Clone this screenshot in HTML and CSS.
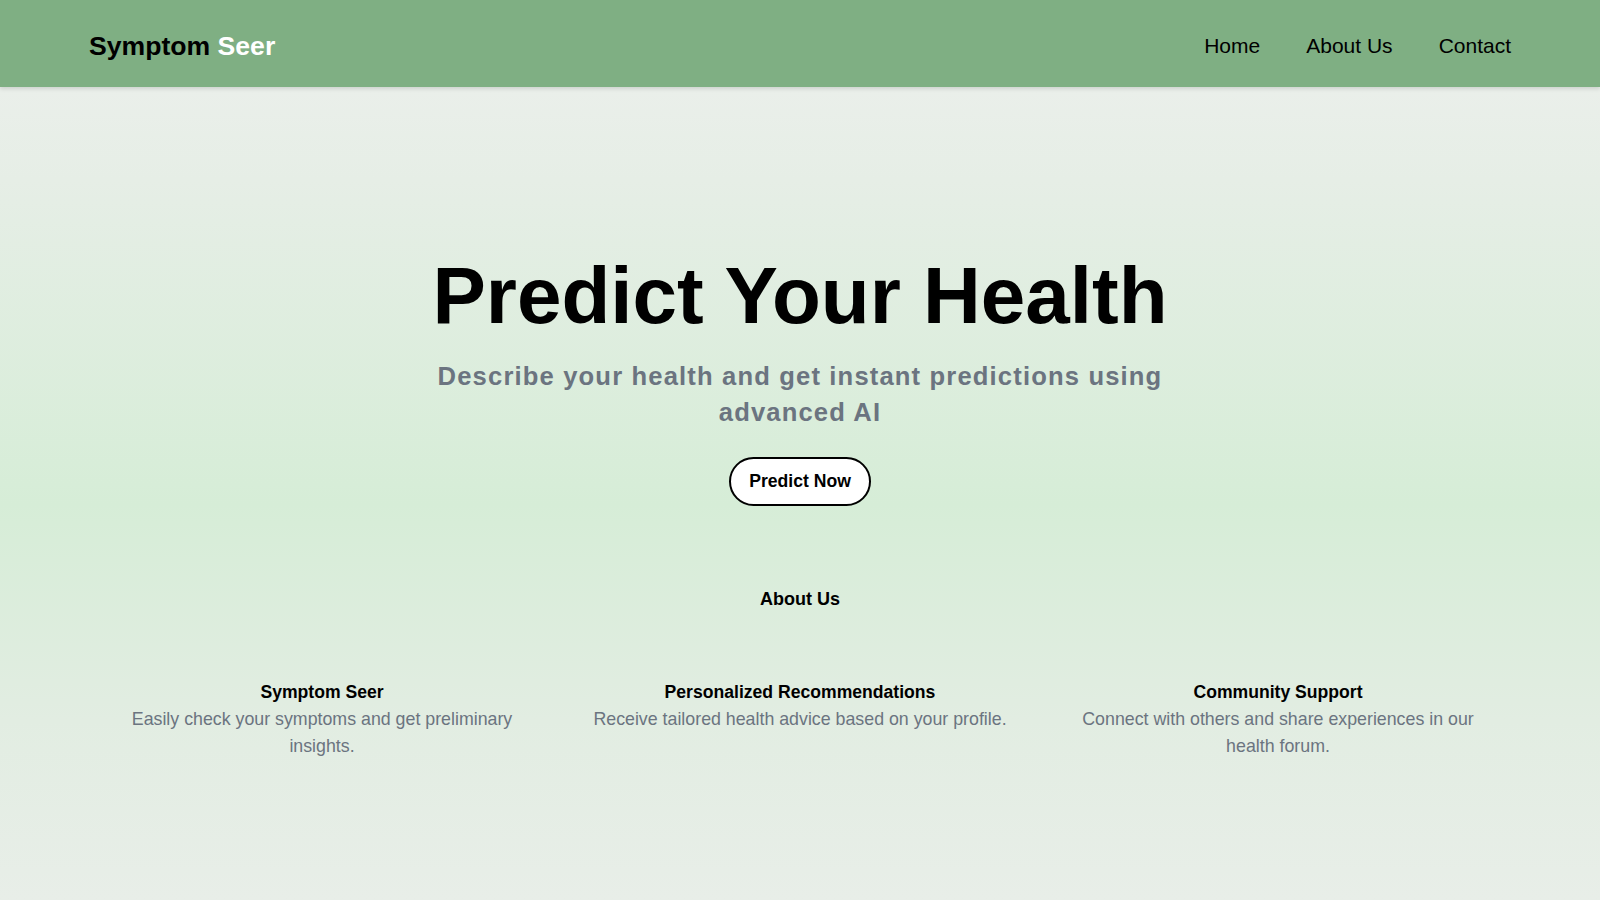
FILE: index.html
```html
<!DOCTYPE html>
<html lang="en">
<head>
<meta charset="utf-8">
<title>Symptom Seer</title>
<link rel="stylesheet" href="styles.css">
</head>
<body>
<header class="site-header">
  <div class="logo">Symptom <span class="logo-accent">Seer</span></div>
  <nav class="nav">
    <a href="#" class="nav-link">Home</a>
    <a href="#" class="nav-link">About Us</a>
    <a href="#" class="nav-link">Contact</a>
  </nav>
</header>
<main class="main">
  <section class="hero">
    <h1 class="hero-title">Predict Your Health</h1>
    <p class="hero-sub">Describe your health and get instant predictions using advanced AI</p>
    <a href="#" class="btn">Predict Now</a>
  </section>
  <section class="about">
    <h2 class="about-title">About Us</h2>
    <div class="features">
      <div class="feature">
        <h3 class="feature-title">Symptom Seer</h3>
        <p class="feature-text">Easily check your symptoms and get preliminary insights.</p>
      </div>
      <div class="feature">
        <h3 class="feature-title">Personalized Recommendations</h3>
        <p class="feature-text">Receive tailored health advice based on your profile.</p>
      </div>
      <div class="feature">
        <h3 class="feature-title">Community Support</h3>
        <p class="feature-text">Connect with others and share experiences in our health forum.</p>
      </div>
    </div>
  </section>
</main>
</body>
</html>
```
FILE: styles.css
```css
* { box-sizing: border-box; }
html, body { margin: 0; padding: 0; }
body {
  font-family: "Liberation Sans", Arial, Helvetica, sans-serif;
  color: #000;
  min-height: 900px;
  background: linear-gradient(to bottom, #eef0ee 0%, #e6eee6 20%, #d6edd7 56%, #e2ede2 80%, #e8eee8 100%);
}
.site-header {
  height: 87px;
  background: #7faf83;
  display: flex;
  align-items: center;
  justify-content: space-between;
  padding: 0 89px 0 89px;
  box-shadow: 0 2px 4px rgba(0,0,0,0.12);
  position: relative;
  z-index: 1;
}
.logo {
  font-size: 26.6px;
  font-weight: 700;
  line-height: 32px;
  margin-top: 4px;
}
.logo-accent { color: #fff; }
.nav { display: flex; gap: 46px; margin-top: 4px; }
.nav-link {
  font-size: 21px;
  color: #000;
  text-decoration: none;
  line-height: 26px;
}
.main { padding-top: 161px; }
.hero {
  display: flex;
  flex-direction: column;
  align-items: center;
  text-align: center;
}
.hero-title {
  margin: 0;
  font-size: 80px;
  line-height: 96px;
  font-weight: 700;
}
.hero-sub {
  margin: 14px 0 0;
  max-width: 790px;
  font-size: 25.6px;
  line-height: 36px;
  font-weight: 700;
  color: #6b7480;
  letter-spacing: 1.15px;
}
.btn {
  margin-top: 27px;
  display: inline-block;
  padding: 12px 18px;
  border: 2px solid #000;
  border-radius: 999px;
  background: #fff;
  color: #000;
  font-size: 17.6px;
  line-height: 21px;
  font-weight: 700;
  text-decoration: none;
}
.about {
  margin-top: 81px;
  text-align: center;
}
.about-title {
  margin: 0;
  font-size: 18px;
  line-height: 24px;
  font-weight: 700;
}
.features {
  margin-top: 69px;
  padding: 0 88px;
  display: grid;
  grid-template-columns: repeat(3, 1fr);
  gap: 10px;
}
.feature { padding: 0 22px; }
.feature-title {
  margin: 0;
  font-size: 17.6px;
  line-height: 24px;
  font-weight: 700;
}
.feature-text {
  margin: 2px 0 0;
  font-size: 17.8px;
  line-height: 27px;
  color: #6b7480;
}
```
